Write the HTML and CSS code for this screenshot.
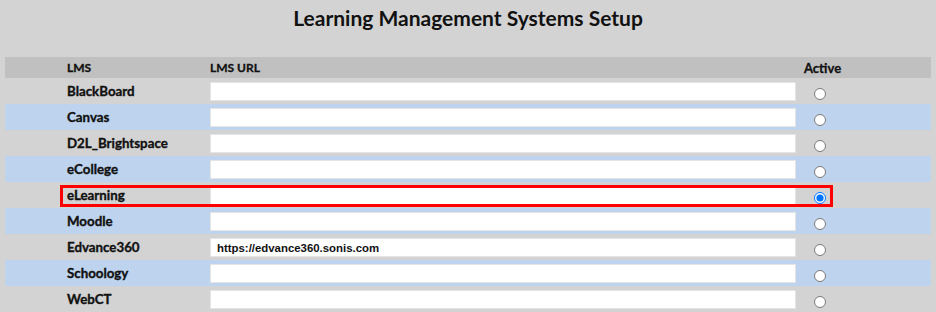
FILE: index.html
```html
<!DOCTYPE html>
<html>
<head>
<meta charset="utf-8">
<link rel="stylesheet" href="styles.css">
</head>
<body>
<h1 class="title">Learning Management Systems Setup</h1>
<div class="table">
  <div class="row head">
    <div class="sp"></div>
    <div class="lbl">LMS</div>
    <div class="url">LMS URL</div>
    <div class="act">Active</div>
    <div></div>
  </div>
  <div class="row">
    <div class="sp"></div><div class="lbl">BlackBoard</div>
    <div class="url"><input class="field" type="text"></div>
    <div class="act"><input type="radio" name="a"></div><div></div>
  </div>
  <div class="row alt">
    <div class="sp"></div><div class="lbl">Canvas</div>
    <div class="url"><input class="field" type="text"></div>
    <div class="act"><input type="radio" name="a"></div><div></div>
  </div>
  <div class="row">
    <div class="sp"></div><div class="lbl">D2L_Brightspace</div>
    <div class="url"><input class="field" type="text"></div>
    <div class="act"><input type="radio" name="a"></div><div></div>
  </div>
  <div class="row alt">
    <div class="sp"></div><div class="lbl">eCollege</div>
    <div class="url"><input class="field" type="text"></div>
    <div class="act"><input type="radio" name="a"></div><div></div>
  </div>
  <div class="row marked">
    <div class="sp"></div><div class="lbl">eLearning</div>
    <div class="url"><input class="field" type="text"></div>
    <div class="act"><input type="radio" name="a" checked></div><div></div>
    <div class="highlight"></div>
  </div>
  <div class="row alt">
    <div class="sp"></div><div class="lbl">Moodle</div>
    <div class="url"><input class="field" type="text"></div>
    <div class="act"><input type="radio" name="a"></div><div></div>
  </div>
  <div class="row">
    <div class="sp"></div><div class="lbl">Edvance360</div>
    <div class="url"><input class="field" type="text" value="https://edvance360.sonis.com"></div>
    <div class="act"><input type="radio" name="a"></div><div></div>
  </div>
  <div class="row alt">
    <div class="sp"></div><div class="lbl">Schoology</div>
    <div class="url"><input class="field" type="text"></div>
    <div class="act"><input type="radio" name="a"></div><div></div>
  </div>
  <div class="row">
    <div class="sp"></div><div class="lbl">WebCT</div>
    <div class="url"><input class="field" type="text"></div>
    <div class="act"><input type="radio" name="a"></div><div></div>
  </div>
</div>
</body>
</html>
```
FILE: styles.css
```css
html, body {
  margin: 0;
  padding: 0;
  background: #d3d3d3;
  font-family: Lato, "DejaVu Sans", sans-serif;
  color: #111;
  overflow: hidden;
}
.title {
  margin: 0;
  height: 57px;
  padding-top: 5px;
  box-sizing: border-box;
  text-align: center;
  font-size: 21px;
  font-weight: 700;
  line-height: 26px;
  color: #111;
}
.table {
  margin-left: 5px;
  width: 926px;
}
.row {
  position: relative;
  display: grid;
  grid-template-columns: 55px 150px 586px 37px 1fr;
  height: 26px;
  align-items: center;
}
.row.alt {
  background: #bdd3ee;
}
.row.head {
  height: 21px;
  background: #c0c0c0;
  font-size: 12px;
  font-weight: 700;
  -webkit-text-stroke: 0.3px #111;
}
.lbl {
  padding-left: 7px;
  font-size: 13.3px;
  font-weight: 700;
  -webkit-text-stroke: 0.35px #111;
}
.head .lbl {
  font-size: 12px;
}
.head .act {
  padding-left: 8px;
  font-size: 13px;
  overflow: visible;
  white-space: nowrap;
}
.url {
  display: flex;
  align-items: center;
  height: 100%;
}
.field {
  box-sizing: border-box;
  width: 586px;
  height: 19px;
  margin: 1px 0 0 0;
  padding: 0 6px;
  border: 1px solid #e4e4e4;
  background: #fff;
  font-family: "Liberation Sans", Arial, sans-serif;
  font-size: 11.4px;
  font-weight: 700;
  color: #111;
  outline: none;
  -webkit-text-stroke: 0;
}
.act {
  height: 100%;
  display: flex;
  align-items: center;
}
.act input {
  margin: 6px 0 0 18px;
  width: 12px;
  height: 12px;
}
.highlight {
  position: absolute;
  left: 55px;
  top: 3px;
  width: 773px;
  height: 22px;
  box-sizing: border-box;
  border: 3px solid #f00;
  pointer-events: none;
}
```
